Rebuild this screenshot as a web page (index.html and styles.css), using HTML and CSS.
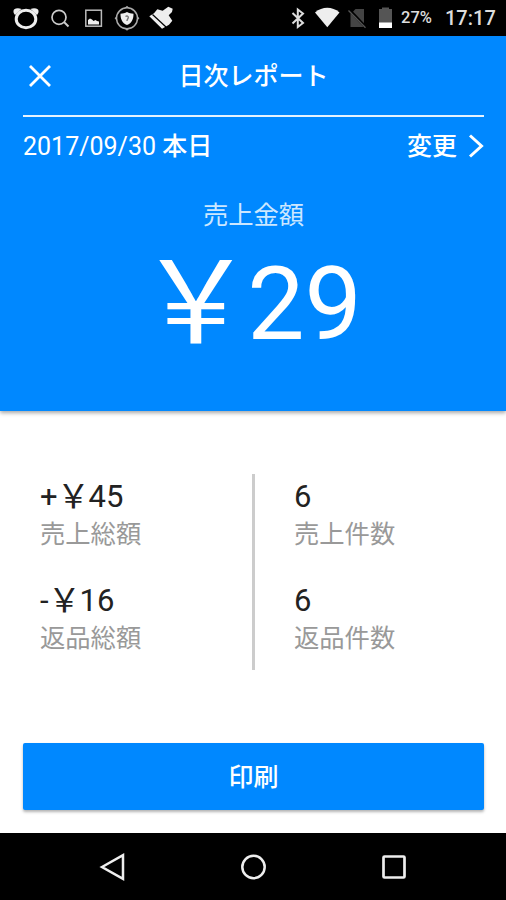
FILE: index.html
```html
<!DOCTYPE html>
<html lang="ja">
<head>
    <meta charset="UTF-8">
    <meta name="viewport" content="width=device-width, initial-scale=1.0">
    <title>日次レポート</title>
    <link rel="stylesheet" href="styles.css">
</head>
<body>
    <div class="status-bar">
        <svg class="status-left" width="180" height="36" viewBox="0 0 180 36">
            <ellipse cx="26" cy="19" rx="9.8" ry="8.8" fill="none" stroke="#eee" stroke-width="3"/>
            <path d="M14 9.5q3-2 7.500-.5L15 15q-2.500-3-1-5.500zM38 9.500q-3-2-7.500-.5L37 15q2.500-3 1-5.500z" fill="#eee"/>
            <circle cx="59" cy="17.300" r="7" fill="none" stroke="#ccc" stroke-width="1.700"/>
            <path d="M64 22l4.500 4.500" stroke="#ccc" stroke-width="2"/>
            <rect x="85.800" y="10.200" width="15.600" height="16" fill="none" stroke="#bbb" stroke-width="1.500"/>
            <path d="M88 24.500v-4.500l2-1.500 2 1 1.500 1.500 2-1 1.500 1 2 .5v3z" fill="#eee"/>
            <circle cx="127" cy="18.300" r="10.500" fill="none" stroke="#aaa" stroke-width="1.500"/>
            <path d="M124.500 8L127 5.800l2.500 2.200zM124.500 28.600l2.500 2.200 2.500-2.200zM116.800 16l-2.200 2.300 2.200 2.200zM137.200 16l2.200 2.300-2.200 2.200z" fill="#aaa"/>
            <path d="M127 12c2 1.200 4 1.600 6.500 1.700 0 5.300-1.500 9.200-6.500 11.300-5-2.100-6.500-6-6.500-11.300 2.500-.1 4.500-.5 6.500-1.700z" fill="#eee"/>
            <path d="M125.500 16.500c1.500-1 3-.3 2.800 1.200s-1.300 1.300-1.300 3.300" fill="none" stroke="#777" stroke-width="1.400"/>
            <path d="M149.300 16.200L154 13.300l3.300-4 5.400 1.400 5.600-4 4.400 2-.7 3.300-3.300 3.300 3.600 5.400-3.300 4-7 4z" fill="#eee"/>
            <path d="M152.500 14.500L166 27" stroke="#000" stroke-width="1.200"/>
        </svg>
        <svg class="status-icons" width="110" height="36" viewBox="284 0 110 36">
            <path d="M292.500 13l10.500 10-5.200 4V9.500l5.200 4-10.500 10" fill="none" stroke="#ddd" stroke-width="2"/>
            <path d="M315 12.500c7.500-6.200 17-6.200 24.500 0L327.300 27.200z" fill="#eee"/>
            <path d="M350.500 14.500l5-5.500h8.500v18h-13.500z" fill="#444"/>
            <path d="M349 9.500l17 18" stroke="#000" stroke-width="3"/>
            <path d="M348.500 10.500l17 17.300" stroke="#555" stroke-width="1.300"/>
            <path d="M379 9h3V7.500h7V9h3v19h-13z" fill="#555"/>
            <rect x="379" y="22.500" width="13" height="5.500" fill="#fff"/>
        </svg>
        <span class="battery">27%</span>
        <span class="clock">17:17</span>
    </div>

    <div class="header">
        <div class="title-bar">
            <svg class="close-icon" width="22" height="22" viewBox="0 0 22 22">
                <path d="M1 1l20 20M21 1L1 21" stroke="#fff" stroke-width="2.800"/>
            </svg>
            <div class="title">日次レポート</div>
        </div>
        <div class="date-bar">
            <span>2017/09/30 <span class="today">本日</span></span>
            <div class="change">
                <span>変更</span>
                <svg width="16" height="24" viewBox="0 0 16 24">
                    <path d="M2 1.500L13.500 12 2 22.500" fill="none" stroke="#fff" stroke-width="3"/>
                </svg>
            </div>
        </div>
        <div class="total-label">売上金額</div>
        <div class="total"><span class="yen">￥</span>29</div>
    </div>

    <div class="content">
        <div class="summary">
            <div class="column">
                <div class="value">+<span class="yen">￥</span>45</div>
                <div class="label">売上総額</div>
                <div class="value">-<span class="yen">￥</span>16</div>
                <div class="label">返品総額</div>
            </div>
            <div class="column">
                <div class="value">6</div>
                <div class="label">売上件数</div>
                <div class="value">6</div>
                <div class="label">返品件数</div>
            </div>
        </div>
        <button class="print-btn">印刷</button>
    </div>

    <div class="nav-bar">
        <svg width="28" height="30" viewBox="0 0 28 30">
            <path d="M3 15L24 3.200V26.800z" fill="none" stroke="#eee" stroke-width="2.500"/>
        </svg>
        <svg width="28" height="30" viewBox="0 0 28 30">
            <circle cx="14.500" cy="15" r="11.200" fill="none" stroke="#eee" stroke-width="2.500"/>
        </svg>
        <svg width="28" height="30" viewBox="0 0 28 30">
            <rect x="3.500" y="4.500" width="21" height="21" rx="1" fill="none" stroke="#eee" stroke-width="2.700"/>
        </svg>
    </div>
</body>
</html>
```
FILE: styles.css
```css
html, body {
    margin: 0;
    padding: 0;
}
body {
    font-family: Roboto, 'Noto Sans CJK JP', sans-serif;
    height: 900px;
    display: flex;
    flex-direction: column;
    background: #fff;
    overflow: hidden;
}

.status-bar {
    display: flex;
    align-items: center;
    height: 36px;
    background: #000;
    color: #ddd;
}
.status-icons {
    margin-left: auto;
    margin-right: 7px;
}
.battery {
    width: 44px;
    font-size: 16.5px;
    font-weight: 500;
    line-height: 38px;
}
.clock {
    width: 61px;
    font-size: 20px;
    font-weight: 500;
    line-height: 38px;
}

.header {
    box-sizing: border-box;
    height: 375px;
    padding: 0 22px 0 23px;
    background: #0088ff;
    color: #fff;
    box-shadow: 0 2px 4px rgba(0, 0, 0, 0.35);
}
.title-bar {
    display: grid;
    grid-template-columns: 40px 1fr 40px;
    align-items: center;
    height: 79px;
    border-bottom: 2px solid #e6f3ff;
}
.close-icon {
    margin-left: 6px;
}
.title {
    font-size: 25px;
    font-weight: 500;
    text-align: center;
    padding-bottom: 4px;
}
.date-bar {
    display: flex;
    justify-content: space-between;
    align-items: center;
    height: 57px;
    font-size: 25px;
}
.date-bar > span,
.change > span {
    padding-bottom: 3px;
}
.today {
    font-weight: 500;
}
.change {
    display: flex;
    align-items: center;
    gap: 11px;
    font-weight: 500;
}
.total-label {
    margin-top: 24px;
    font-size: 25.3px;
    line-height: 36px;
    text-align: center;
    color: #cce7ff;
}
.total {
    font-size: 102px;
    line-height: 120px;
    text-align: center;
    margin-top: 10px;
}
/* 円記号は数字より少し大きく */
.yen {
    display: inline-block;
    transform: scale(1.14, 1.12);
}
.value .yen {
    transform: scale(1.06, 1.08);
}

.content {
    flex: 1;
    display: flex;
    flex-direction: column;
    padding: 63px 22px 23px 23px;
}
.summary {
    display: grid;
    grid-template-columns: 229px 1fr;
    grid-template-rows: 196px;
    height: 196px;
}
.column {
    box-sizing: border-box;
    height: 196px;
    padding-left: 17px;
}
.column + .column {
    border-left: 3px solid #ccc;
    padding-left: 39px;
}
.value {
    font-size: 31px;
    line-height: 46px;
    color: #222;
}
.label {
    font-size: 25.3px;
    line-height: 29px;
    margin-bottom: 29px;
    color: #999;
}
.print-btn {
    height: 67px;
    margin-top: auto;
    padding-bottom: 4px;
    border: none;
    border-radius: 2px;
    background: #0088ff;
    color: #fff;
    font-family: inherit;
    font-size: 25px;
    font-weight: 500;
    box-shadow: 0 2px 3px rgba(0, 0, 0, 0.3);
}

.nav-bar {
    display: flex;
    justify-content: center;
    align-items: center;
    gap: 112.5px;
    height: 67px;
    background: #000;
}
```
